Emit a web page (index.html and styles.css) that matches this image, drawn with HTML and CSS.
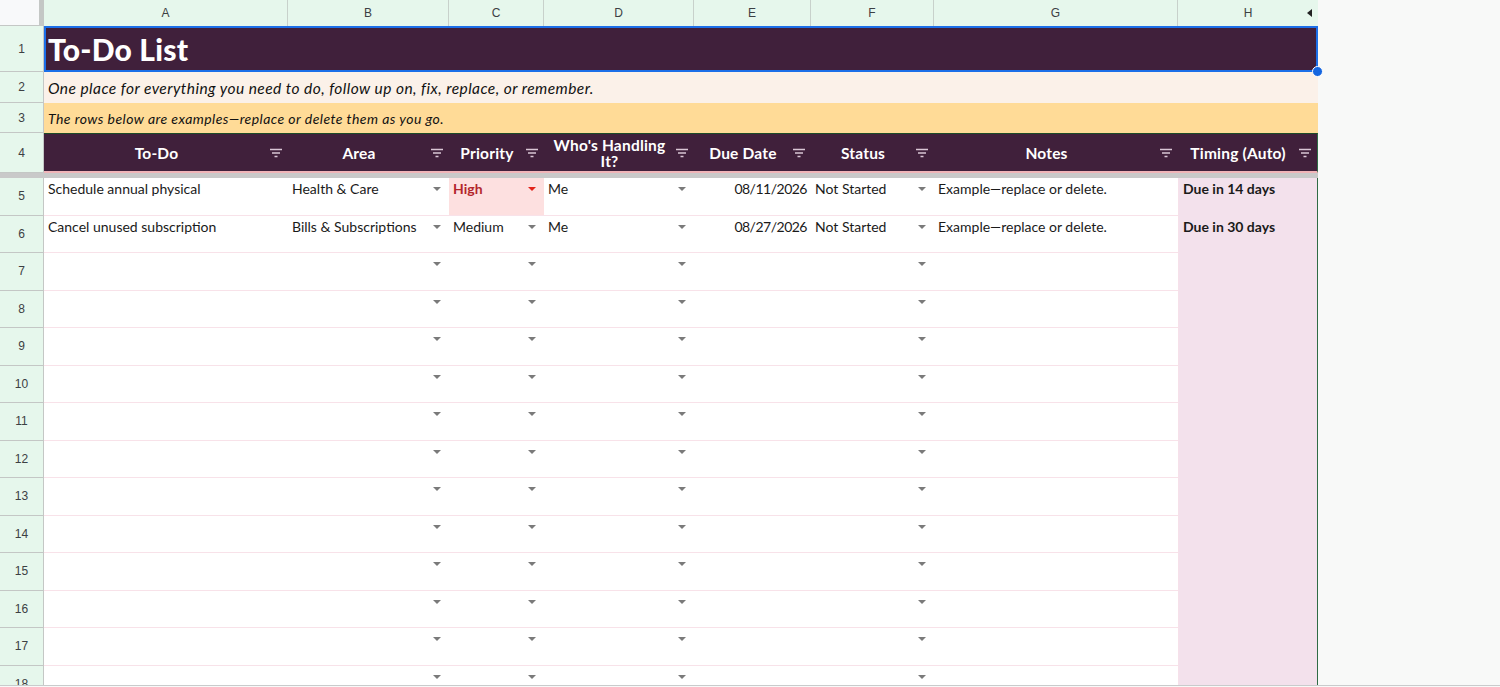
FILE: index.html
```html
<!DOCTYPE html>
<html>
<head>
<meta charset="utf-8">
<link rel="stylesheet" href="styles.css">
</head>
<body>
<div class="viewport">
<div class="sheet">
  <div class="row colhead">
    <div class="corner"><span class="corner-gray"></span><span class="corner-bar"></span></div>
    <div class="ch">A</div><div class="ch">B</div><div class="ch">C</div><div class="ch">D</div>
    <div class="ch">E</div><div class="ch">F</div><div class="ch">G</div>
    <div class="ch ch-last">H<span class="collapse"></span></div>
  </div>

  <div class="row r1">
    <div class="rh">1</div>
    <div class="title-cell">To-Do List<span class="sel-handle"></span></div>
  </div>
  <div class="row r2">
    <div class="rh">2</div>
    <div class="wide-cell sub">One place for everything you need to do, follow up on, fix, replace, or remember.</div>
  </div>
  <div class="row r3">
    <div class="rh">3</div>
    <div class="wide-cell note">The rows below are examples—replace or delete them as you go.</div>
  </div>
  <div class="row r4">
    <div class="rh">4</div>
    <div class="hc"><span class="ht">To-Do</span><svg class="filt" viewBox="0 0 14 10"><path d="M1 1.5h12M3 5h8M5.5 8.5h3"/></svg></div>
    <div class="hc"><span class="ht">Area</span><svg class="filt" viewBox="0 0 14 10"><path d="M1 1.5h12M3 5h8M5.5 8.5h3"/></svg></div>
    <div class="hc"><span class="ht">Priority</span><svg class="filt" viewBox="0 0 14 10"><path d="M1 1.5h12M3 5h8M5.5 8.5h3"/></svg></div>
    <div class="hc"><span class="ht ht-wrap">Who's Handling It?</span><svg class="filt" viewBox="0 0 14 10"><path d="M1 1.5h12M3 5h8M5.5 8.5h3"/></svg></div>
    <div class="hc"><span class="ht">Due Date</span><svg class="filt" viewBox="0 0 14 10"><path d="M1 1.5h12M3 5h8M5.5 8.5h3"/></svg></div>
    <div class="hc"><span class="ht">Status</span><svg class="filt" viewBox="0 0 14 10"><path d="M1 1.5h12M3 5h8M5.5 8.5h3"/></svg></div>
    <div class="hc"><span class="ht">Notes</span><svg class="filt" viewBox="0 0 14 10"><path d="M1 1.5h12M3 5h8M5.5 8.5h3"/></svg></div>
    <div class="hc hc-last"><span class="ht">Timing (Auto)</span><svg class="filt" viewBox="0 0 14 10"><path d="M1 1.5h12M3 5h8M5.5 8.5h3"/></svg></div>
  </div>
  <div class="freeze"></div>

  <div class="row dr">
    <div class="rh">5</div>
    <div class="c">Schedule annual physical</div>
    <div class="c dd"><span>Health &amp; Care</span><i class="arr"></i></div>
    <div class="c dd high"><span>High</span><i class="arr arr-red"></i></div>
    <div class="c dd"><span>Me</span><i class="arr"></i></div>
    <div class="c date">08/11/2026</div>
    <div class="c dd"><span>Not Started</span><i class="arr"></i></div>
    <div class="c">Example—replace or delete.</div>
    <div class="c timing">Due in 14 days</div>
  </div>
  <div class="row dr">
    <div class="rh">6</div>
    <div class="c">Cancel unused subscription</div>
    <div class="c dd"><span>Bills &amp; Subscriptions</span><i class="arr"></i></div>
    <div class="c dd"><span>Medium</span><i class="arr"></i></div>
    <div class="c dd"><span>Me</span><i class="arr"></i></div>
    <div class="c date">08/27/2026</div>
    <div class="c dd"><span>Not Started</span><i class="arr"></i></div>
    <div class="c">Example—replace or delete.</div>
    <div class="c timing">Due in 30 days</div>
  </div>
  <div class="row dr"><div class="rh">7</div><div class="c"></div><div class="c dd"><i class="arr"></i></div><div class="c dd"><i class="arr"></i></div><div class="c dd"><i class="arr"></i></div><div class="c"></div><div class="c dd"><i class="arr"></i></div><div class="c"></div><div class="c timing"></div></div>
  <div class="row dr"><div class="rh">8</div><div class="c"></div><div class="c dd"><i class="arr"></i></div><div class="c dd"><i class="arr"></i></div><div class="c dd"><i class="arr"></i></div><div class="c"></div><div class="c dd"><i class="arr"></i></div><div class="c"></div><div class="c timing"></div></div>
  <div class="row dr"><div class="rh">9</div><div class="c"></div><div class="c dd"><i class="arr"></i></div><div class="c dd"><i class="arr"></i></div><div class="c dd"><i class="arr"></i></div><div class="c"></div><div class="c dd"><i class="arr"></i></div><div class="c"></div><div class="c timing"></div></div>
  <div class="row dr"><div class="rh">10</div><div class="c"></div><div class="c dd"><i class="arr"></i></div><div class="c dd"><i class="arr"></i></div><div class="c dd"><i class="arr"></i></div><div class="c"></div><div class="c dd"><i class="arr"></i></div><div class="c"></div><div class="c timing"></div></div>
  <div class="row dr"><div class="rh">11</div><div class="c"></div><div class="c dd"><i class="arr"></i></div><div class="c dd"><i class="arr"></i></div><div class="c dd"><i class="arr"></i></div><div class="c"></div><div class="c dd"><i class="arr"></i></div><div class="c"></div><div class="c timing"></div></div>
  <div class="row dr"><div class="rh">12</div><div class="c"></div><div class="c dd"><i class="arr"></i></div><div class="c dd"><i class="arr"></i></div><div class="c dd"><i class="arr"></i></div><div class="c"></div><div class="c dd"><i class="arr"></i></div><div class="c"></div><div class="c timing"></div></div>
  <div class="row dr"><div class="rh">13</div><div class="c"></div><div class="c dd"><i class="arr"></i></div><div class="c dd"><i class="arr"></i></div><div class="c dd"><i class="arr"></i></div><div class="c"></div><div class="c dd"><i class="arr"></i></div><div class="c"></div><div class="c timing"></div></div>
  <div class="row dr"><div class="rh">14</div><div class="c"></div><div class="c dd"><i class="arr"></i></div><div class="c dd"><i class="arr"></i></div><div class="c dd"><i class="arr"></i></div><div class="c"></div><div class="c dd"><i class="arr"></i></div><div class="c"></div><div class="c timing"></div></div>
  <div class="row dr"><div class="rh">15</div><div class="c"></div><div class="c dd"><i class="arr"></i></div><div class="c dd"><i class="arr"></i></div><div class="c dd"><i class="arr"></i></div><div class="c"></div><div class="c dd"><i class="arr"></i></div><div class="c"></div><div class="c timing"></div></div>
  <div class="row dr"><div class="rh">16</div><div class="c"></div><div class="c dd"><i class="arr"></i></div><div class="c dd"><i class="arr"></i></div><div class="c dd"><i class="arr"></i></div><div class="c"></div><div class="c dd"><i class="arr"></i></div><div class="c"></div><div class="c timing"></div></div>
  <div class="row dr"><div class="rh">17</div><div class="c"></div><div class="c dd"><i class="arr"></i></div><div class="c dd"><i class="arr"></i></div><div class="c dd"><i class="arr"></i></div><div class="c"></div><div class="c dd"><i class="arr"></i></div><div class="c"></div><div class="c timing"></div></div>
  <div class="row dr"><div class="rh">18</div><div class="c"></div><div class="c dd"><i class="arr"></i></div><div class="c dd"><i class="arr"></i></div><div class="c dd"><i class="arr"></i></div><div class="c"></div><div class="c dd"><i class="arr"></i></div><div class="c"></div><div class="c timing"></div></div>
</div>
</div>
</body>
</html>
```

FILE: styles.css
```css
* { box-sizing: border-box; }
html, body { margin: 0; padding: 0; }
body {
  background: #f8f9f8;
  font-family: Lato, "DejaVu Sans", sans-serif;
  color: #1f1f1f;
  overflow: hidden;
  height: 687px;
}
.viewport {
  height: 686px;
  overflow: hidden;
  border-bottom: 1px solid #c9cbcc;
}
.sheet {
  width: 1318px;
  position: relative;
}
.row {
  display: grid;
  grid-template-columns: 44px 244px 161px 95px 150px 117px 123px 244px 140px;
}

/* column header */
.colhead { height: 26px; }
.corner { display: flex; height: 26px; }
.corner-gray { width: 39px; background: #f8f9fa; border-bottom: 1px solid #c4c7c5; }
.corner-bar { width: 5px; background: #c4c7c5; }
.ch {
  background: #e6f7ec;
  border-right: 1px solid #c8d1cb;
  font: 12px "Liberation Sans", Arial, sans-serif;
  color: #3c4043;
  display: flex;
  align-items: center;
  justify-content: center;
  position: relative;
}
.ch-last { border-right: none; }
.collapse {
  position: absolute;
  right: 6px;
  top: 9px;
  width: 0; height: 0;
  border-top: 4px solid transparent;
  border-bottom: 4px solid transparent;
  border-right: 5px solid #222;
}

/* row headers */
.rh {
  background: #e6f7ec;
  border-right: 1px solid #c4c7c5;
  border-bottom: 1px solid #c4c7c5;
  font: 12px "Liberation Sans", Arial, sans-serif;
  color: #3c4043;
  display: flex;
  align-items: center;
  justify-content: center;
}

/* title */
.r1 { height: 46px; }
.title-cell {
  grid-column: 2 / 10;
  background: #40203b;
  border: 2px solid #1b6fe8;
  color: #fff;
  font-weight: 900;
  font-size: 30px;
  padding-left: 2px;
  display: flex;
  align-items: center;
  position: relative;
  letter-spacing: 0.2px;
}
.sel-handle {
  position: absolute;
  right: -7px;
  bottom: -7px;
  width: 11px;
  height: 11px;
  border-radius: 50%;
  background: #1566e0;
  border: 1px solid #fff;
  z-index: 5;
}
.r2 { height: 31px; }
.r3 { height: 30px; }
.wide-cell {
  grid-column: 2 / 10;
  display: flex;
  align-items: center;
  padding-left: 4px;
  font-style: italic;
  color: #111;
  white-space: nowrap;
}
.sub { background: #fbf1e9; font-size: 15.5px; letter-spacing: 0.45px; }
.note { background: #ffdb97; font-size: 14px; letter-spacing: 0.45px; }

/* header row */
.r4 { height: 40px; }
.hc {
  background: #40203b;
  border-top: 1px solid #1d4b28;
  border-bottom: 2px solid #f0b4b8;
  display: flex;
  align-items: center;
  color: #fff;
  font-weight: 700;
  font-size: 15.5px;
  line-height: 16px;
  letter-spacing: 0.2px;
  padding-right: 5px;
}
.hc-last { border-right: 1px solid #2f6b45; }
.ht { flex: 1; text-align: center; padding: 0 2px; }
.ht-wrap { padding: 0 8px; }
.filt {
  width: 14px;
  height: 10px;
  flex: none;
  margin-top: 1px;
}
.filt path { stroke: #d9c6d5; stroke-width: 1.6; fill: none; }

.freeze {
  height: 5px;
  background: #c9c9c9;
  width: 1318px;
}

/* data rows */
.dr { height: 37.5px; }
.c {
  border-bottom: 1px solid #f8e2e9;
  background: #fff;
  padding: 2px 4px 0 4px;
  font-size: 14px;
  line-height: 17px;
  white-space: nowrap;
  overflow: hidden;
  color: #1a1a1a;
}
.dd {
  display: flex;
  justify-content: space-between;
  align-items: flex-start;
  padding-right: 8px;
}
.arr {
  display: block;
  width: 0; height: 0;
  margin-top: 7px;
  border-left: 4.5px solid transparent;
  border-right: 4.5px solid transparent;
  border-top: 4.5px solid #7a7a7a;
  margin-left: auto;
}
.arr-red { border-top-color: #e2231a; }
.high { background: #fde0e0; }
.high span { color: #b3262c; font-weight: 700; }
.date { text-align: right; letter-spacing: -0.5px; }
.timing {
  background: #f3e1ec;
  border-bottom: none;
  border-left: 1px solid #f6e1ea;
  border-right: 1px solid #2f6b45;
  font-weight: 700;
}
```
